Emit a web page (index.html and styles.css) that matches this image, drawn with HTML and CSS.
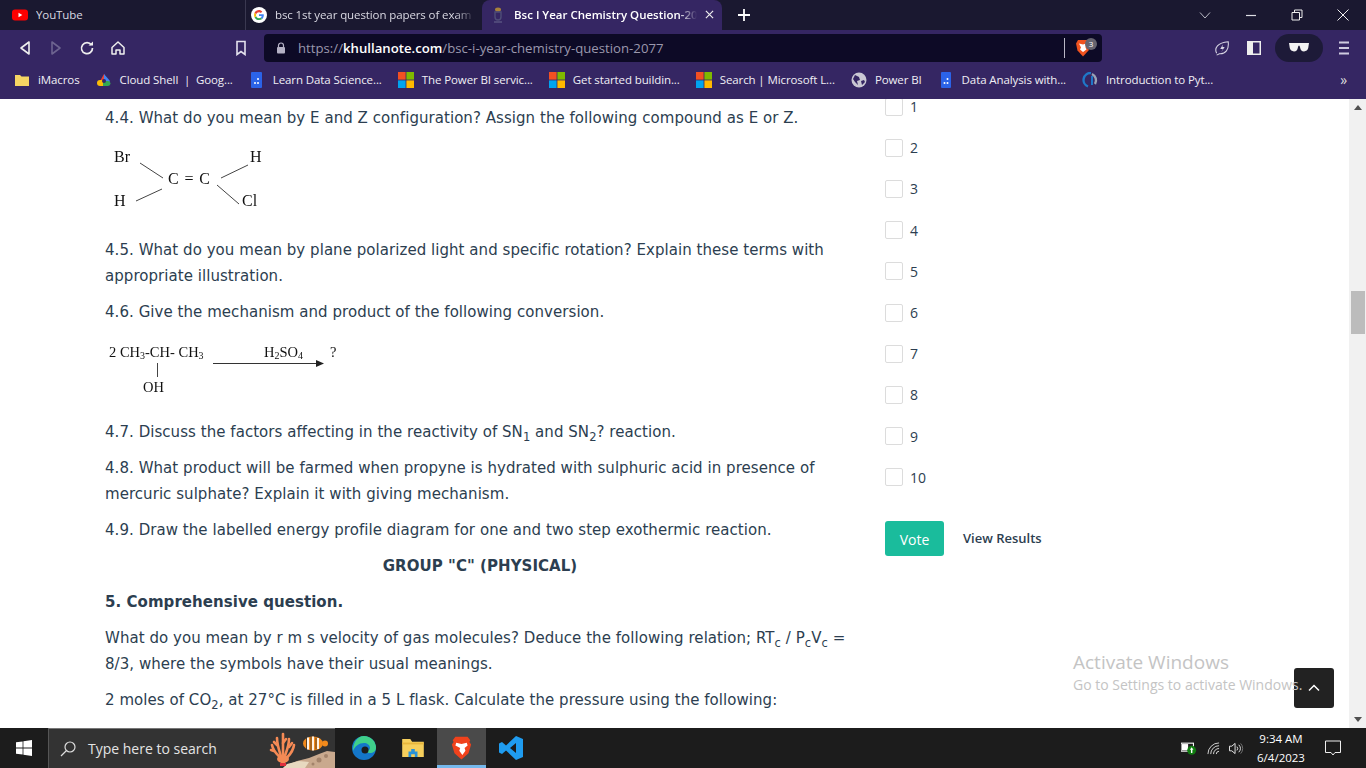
FILE: index.html
```html
<!DOCTYPE html>
<html lang="en">
<head>
<meta charset="utf-8">
<title>Bsc I Year Chemistry Question-2077</title>
<link rel="stylesheet" href="styles.css">
</head>
<body>
<div class="screen">
  <header class="tabstrip">
    <div class="tab tab-yt">
      <svg class="ic16" viewBox="0 0 16 16"><rect x="0" y="2.500" width="16" height="11" rx="3" fill="#f00"/><path d="M6.500 5.800v4.400L10.300 8z" fill="#fff"/></svg>
      <span class="tab-title">YouTube</span>
    </div>
    <div class="tab tab-g">
      <svg class="ic16" viewBox="0 0 16 16"><circle cx="8" cy="8" r="8" fill="#fff"/><path d="M12.800 8.200c0-.4 0-.7-.1-1H8v1.900h2.700c-.1.700-.5 1.200-1 1.600l1.600 1.200c.9-.9 1.500-2.200 1.500-3.700z" fill="#4285f4"/><path d="M8 13c1.300 0 2.400-.4 3.300-1.100l-1.600-1.200c-.4.300-1 .5-1.700.5-1.300 0-2.400-.9-2.800-2L3.600 10.400C4.400 12 6.100 13 8 13z" fill="#34a853"/><path d="M5.200 9.200c-.2-.7-.2-1.400 0-2L3.600 5.600c-.7 1.400-.7 3.400 0 4.800z" fill="#fbbc05"/><path d="M8 5.200c.7 0 1.400.3 1.900.7l1.400-1.400C10.400 3.600 9.300 3 8 3 6.100 3 4.400 4 3.600 5.600l1.600 1.600c.4-1.200 1.500-2 2.800-2z" fill="#ea4335"/></svg>
      <span class="tab-title tab-fade">bsc 1st year question papers of exam 2</span>
    </div>
    <div class="tab tab-active">
      <svg class="ic16" viewBox="0 0 16 16"><ellipse cx="8" cy="2.500" rx="3" ry="2" fill="#a8823c"/><path d="M5 5h6v5c0 2-1 3-3 3s-3-1-3-3z" fill="none" stroke="#4f4e78" stroke-width="1.400"/><path d="M4 15h8" stroke="#6a6890"/></svg>
      <span class="tab-title tab-strong tab-fade">Bsc I Year Chemistry Question-2077</span>
      <svg class="ic10" viewBox="0 0 10 10"><path d="M1 1l8 8M9 1l-8 8" stroke="#eee" stroke-width="1.300"/></svg>
    </div>
    <svg class="newtab" viewBox="0 0 12 12"><path d="M6 0v12M0 6h12" stroke="#fff" stroke-width="1.800"/></svg>
    <div class="winctl">
      <svg viewBox="0 0 12 12" class="ctl"><path d="M1 3.500l5 5.500 5-5.500" fill="none" stroke="#b9b9c4"/></svg>
      <svg viewBox="0 0 12 12" class="ctl"><path d="M1 6.500h10" stroke="#dedee4" stroke-width="1.200"/></svg>
      <svg viewBox="0 0 12 12" class="ctl"><path d="M1 3.500h7.500V11H1zM3.500 3.500V1H11v7.500H8.500" fill="none" stroke="#eee"/></svg>
      <svg viewBox="0 0 12 12" class="ctl"><path d="M.5.500l11 11M11.500.500l-11 11" stroke="#eee"/></svg>
    </div>
  </header>

  <div class="toolbar">
    <nav class="navbtns">
      <svg class="nav-i" viewBox="0 0 14 16"><path d="M11 2v12L3 8z" fill="none" stroke="#eee" stroke-width="1.600" stroke-linejoin="round"/></svg>
      <svg class="nav-i" viewBox="0 0 14 16"><path d="M3 2v12l8-6z" fill="none" stroke="#6d6490" stroke-width="1.600" stroke-linejoin="round"/></svg>
      <svg class="nav-i" viewBox="0 0 16 16"><path d="M12.500 5A5.500 5.500 0 1 0 13.500 8" fill="none" stroke="#eee" stroke-width="1.700"/><path d="M9.500 5.500h4.500V1.500z" fill="#eee"/></svg>
      <svg class="nav-i" viewBox="0 0 16 16"><path d="M8 2L2 7.500V14h4v-4h4v4h4V7.500z" fill="none" stroke="#eee" stroke-width="1.500" stroke-linejoin="round"/></svg>
    </nav>
    <svg class="bookmark-i" viewBox="0 0 12 16"><path d="M2 1.500h8v13L6 11.500l-4 3z" fill="none" stroke="#e4e2ee" stroke-width="1.600"/></svg>
    <div class="urlbar">
      <svg class="lock" viewBox="0 0 10 12"><path d="M2.500 5V3.500a2.500 2.500 0 0 1 5 0V5" fill="none" stroke="#b5b2c6" stroke-width="1.200"/><rect x="1" y="5" width="8" height="6.500" rx="1" fill="#b5b2c6"/></svg>
      <span class="url"><span class="url-dim">https://</span><span class="url-host">khullanote.com</span><span class="url-dim">/bsc-i-year-chemistry-question-2077</span></span>
      <span class="url-div"></span>
      <span class="shield">
        <svg class="shield-i" viewBox="0 0 16 18"><path d="M3 1h10l2 3.500-1.500 7L8 17.500 2.500 11.500 1 4.500z" fill="#f0521f"/><path d="M4 4.500l4 1 3-1-.5 4 1 2L8 13l-3-2.500 1-2z" fill="#fff"/></svg>
        <span class="badge">3</span>
      </span>
    </div>
    <div class="tool-right">
      <svg class="tr-leaf" viewBox="0 0 18 18"><path d="M3 15C0 9 4 3 16 2c1 9-3 14-10 13.500L3 17" fill="none" stroke="#d8d6e4" stroke-width="1.200"/><path d="M10 5L7 10h3l-2 4 4-6H9.500z" fill="#d8d6e4"/></svg>
      <svg class="tr-panel" viewBox="0 0 14 14"><rect x=".750" y=".750" width="12.500" height="12.500" fill="none" stroke="#eee" stroke-width="1.500"/><rect x="1" y="1" width="5" height="12" fill="#eee"/></svg>
      <span class="pill"><svg class="glasses" viewBox="0 0 18 8"><path d="M0 0h18l-.7 4.500Q16.500 7.500 13.500 7.500T10 4L9.500 2.500h-1L8 4Q7.500 7.500 4.500 7.500T.7 4.500z" fill="#f2f2f2"/></svg></span>
      <svg class="tr-menu" viewBox="0 0 12 14"><path d="M1 1.500h10M1 7h10M1 12.500h10" stroke="#cfcbe0" stroke-width="1.800"/></svg>
    </div>
  </div>

  <div class="bookmarks">
    <a class="bm"><svg class="ic16" viewBox="0 0 16 16"><path d="M1 3h5l1.500 1.500H15V14H1z" fill="#f5d563"/></svg><span>iMacros</span></a>
    <a class="bm"><svg class="ic16" viewBox="0 0 16 16"><path d="M3 11L8 2l3 5-4 4z" fill="#ea4335"/><path d="M8 2l6 7-3 4-3-3z" fill="#4285f4"/><path d="M1 11a3 3 0 0 1 3-3h3v6H4a3 3 0 0 1-3-3z" fill="#fbbc05"/><path d="M7 9h5a2.500 2.500 0 0 1 0 5H7z" fill="#34a853"/><circle cx="8" cy="9" r="2" fill="#352663"/></svg><span>Cloud Shell&nbsp; | &nbsp;Goog...</span></a>
    <a class="bm"><svg class="ic16" viewBox="0 0 16 16"><rect x="2" y="0" width="11" height="16" rx="1" fill="#2b63e8"/><circle cx="9" cy="7" r="1" fill="#fff"/><circle cx="9" cy="11" r="1" fill="#fff"/><circle cx="6" cy="11" r="1" fill="#fff"/></svg><span>Learn Data Science...</span></a>
    <a class="bm"><svg class="ic16" viewBox="0 0 16 16"><rect width="7.600" height="7.600" fill="#f25022"/><rect x="8.400" width="7.600" height="7.600" fill="#7fba00"/><rect y="8.400" width="7.600" height="7.600" fill="#00a4ef"/><rect x="8.400" y="8.400" width="7.600" height="7.600" fill="#ffb900"/></svg><span>The Power BI servic...</span></a>
    <a class="bm"><svg class="ic16" viewBox="0 0 16 16"><rect width="7.600" height="7.600" fill="#f25022"/><rect x="8.400" width="7.600" height="7.600" fill="#7fba00"/><rect y="8.400" width="7.600" height="7.600" fill="#00a4ef"/><rect x="8.400" y="8.400" width="7.600" height="7.600" fill="#ffb900"/></svg><span>Get started buildin...</span></a>
    <a class="bm"><svg class="ic16" viewBox="0 0 16 16"><rect width="7.600" height="7.600" fill="#f25022"/><rect x="8.400" width="7.600" height="7.600" fill="#7fba00"/><rect y="8.400" width="7.600" height="7.600" fill="#00a4ef"/><rect x="8.400" y="8.400" width="7.600" height="7.600" fill="#ffb900"/></svg><span>Search | Microsoft L...</span></a>
    <a class="bm"><svg class="ic16" viewBox="0 0 16 16"><circle cx="8" cy="8" r="7.500" fill="#c9c7d3"/><path d="M4 3l4 2 1 3-3 1 1 4-3-3-2-3zM10 9l3-1 1 2-3 3z" fill="#352663"/></svg><span>Power BI</span></a>
    <a class="bm"><svg class="ic16" viewBox="0 0 16 16"><rect x="3" y="0" width="10" height="16" rx="1" fill="#2b63e8"/><circle cx="9.500" cy="7" r="1" fill="#fff"/><circle cx="9.500" cy="11" r="1" fill="#fff"/><circle cx="6.500" cy="11" r="1" fill="#fff"/></svg><span>Data Analysis with...</span></a>
    <a class="bm"><svg class="ic16" viewBox="0 0 16 16"><path d="M9 1a7 7 0 0 0-3 13.500" fill="none" stroke="#1f78c8" stroke-width="2.400"/><path d="M10 2a7 7 0 0 1 3 10" fill="none" stroke="#9aa3b5" stroke-width="2.400"/><path d="M10 4v9" stroke="#1f78c8" stroke-width="2"/></svg><span>Introduction to Pyt...</span></a>
    <span class="bm-more">»</span>
  </div>

  <div class="viewport">
    <div class="page">
      <main class="article">
        <p>4.4. What do you mean by E and Z configuration? Assign the following compound as E or Z.</p>
        <figure class="fig fig-ez">
          <svg class="chem" width="170" height="80" viewBox="0 0 170 80">
            <text x="14" y="26">Br</text><text x="150" y="26">H</text>
            <text class="cc" x="68" y="48">C = C</text>
            <text x="14" y="70">H</text><text x="142" y="70">Cl</text>
            <path d="M40 27l23 15M36 65l26-12M121 42l27-13M117 49l22 19" stroke="#444" fill="none"/>
          </svg>
        </figure>
        <p>4.5. What do you mean by plane polarized light and specific rotation? Explain these terms with appropriate illustration.</p>
        <p>4.6. Give the mechanism and product of the following conversion.</p>
        <figure class="fig fig-rx">
          <svg class="chem chem-rx" width="240" height="65" viewBox="0 0 240 65">
            <text x="9" y="21">2 CH<tspan class="s" dy="2">3</tspan><tspan dy="-2">-CH- CH</tspan><tspan class="s" dy="2">3</tspan></text>
            <text x="164" y="21">H<tspan class="s" dy="2">2</tspan><tspan dy="-2">SO</tspan><tspan class="s" dy="2">4</tspan></text>
            <text x="230" y="21">?</text>
            <text x="43" y="56">OH</text>
            <path d="M57.500 27v14" stroke="#444" fill="none"/>
            <path d="M113 27.500h104" stroke="#333" fill="none"/>
            <path d="M216 24l8 3.500-8 3.500z" fill="#222"/>
          </svg>
        </figure>
        <p>4.7. Discuss the factors affecting in the reactivity of SN<sub>1</sub> and SN<sub>2</sub>? reaction.</p>
        <p>4.8. What product will be farmed when propyne is hydrated with sulphuric acid in presence of mercuric sulphate? Explain it with giving mechanism.</p>
        <p>4.9. Draw the labelled energy profile diagram for one and two step exothermic reaction.</p>
        <p class="center"><strong>GROUP "C" (PHYSICAL)</strong></p>
        <p><strong>5. Comprehensive question.</strong></p>
        <p>What do you mean by r m s velocity of gas molecules? Deduce the following relation; RT<sub>c</sub> / P<sub>c</sub>V<sub>c</sub> = 8/3, where the symbols have their usual meanings.</p>
        <p>2 moles of CO<sub>2</sub>, at 27°C is filled in a 5 L flask. Calculate the pressure using the following:</p>
      </main>
      <aside class="poll">
        <ul class="options">
          <li><span class="box"></span>1</li>
          <li><span class="box"></span>2</li>
          <li><span class="box"></span>3</li>
          <li><span class="box"></span>4</li>
          <li><span class="box"></span>5</li>
          <li><span class="box"></span>6</li>
          <li><span class="box"></span>7</li>
          <li><span class="box"></span>8</li>
          <li><span class="box"></span>9</li>
          <li><span class="box"></span>10</li>
        </ul>
        <div class="poll-actions">
          <button class="vote" type="button">Vote</button>
          <a class="results">View Results</a>
        </div>
      </aside>
    </div>
    <div class="scrollbar">
      <span class="arrow-up"></span>
      <span class="thumb"></span>
      <span class="arrow-down"></span>
    </div>
    <button class="totop" type="button"><svg viewBox="0 0 12 8" class="totop-i"><path d="M1 6.500l5-5 5 5" fill="none" stroke="#fff" stroke-width="1.500"/></svg></button>
    <div class="watermark">
      <div class="wm-1">Activate Windows</div>
      <div class="wm-2">Go to Settings to activate Windows.</div>
    </div>
  </div>

  <footer class="taskbar">
    <svg class="start" viewBox="0 0 16 16"><path d="M0 2.300l6.600-.9v6.200H0zM7.400 1.300L16 0v7.600H7.400zM0 8.400h6.600v6.200L0 13.700zM7.400 8.400H16V16l-8.600-1.300z" fill="#fff"/></svg>
    <div class="search">
      <svg class="search-i" viewBox="0 0 16 16"><circle cx="10" cy="6" r="5" fill="none" stroke="#ddd" stroke-width="1.200"/><path d="M6.500 9.500L1 15" stroke="#ddd" stroke-width="1.300"/></svg>
      <span class="search-text">Type here to search</span>
      <svg class="search-art" viewBox="0 0 66 39">
        <path d="M66 39V23l-8-1-8 3-10 4-12 3-10 4-4 3z" fill="#c9a98e"/>
        <path d="M18 35l12-3 10 1-4 6H14z" fill="#e8d9c0"/>
        <circle cx="50" cy="31" r="2.500" fill="#a3836b"/><circle cx="57" cy="27" r="2" fill="#a3836b"/><circle cx="44" cy="35" r="1.500" fill="#a3836b"/>
        <g fill="none" stroke="#f58a55" stroke-width="2.600" stroke-linecap="round">
          <path d="M14 34C13 27 5 26 3 16"/><path d="M14 34C12 26 8 18 8 9"/><path d="M14 34V5"/><path d="M14 34c1-8 6-14 6-24"/><path d="M14 34c3-6 10-9 11-18"/>
          <path d="M8 16l-3-3M14 14l3-4M20 18l3-4M5 22l-3-1"/>
        </g>
        <ellipse cx="14" cy="30" rx="6" ry="4" fill="#f58a55"/>
        <rect x="11" y="34" width="6" height="3" fill="#e02f3d"/>
        <ellipse cx="44" cy="14.500" rx="10" ry="7" fill="#f28a1c"/>
        <path d="M39 8.500v12M44 7.500v14M49 9v11" stroke="#fff" stroke-width="1.800"/>
        <path d="M37.500 9v11M42 8v13M47 8.500v12" stroke="#222" stroke-width=".7"/>
        <circle cx="56" cy="14.500" r="3" fill="#f28a1c"/>
      </svg>
    </div>
    <div class="pins">
      <span class="pin"><svg class="pin-i" viewBox="0 0 24 24"><circle cx="12" cy="12" r="12" fill="#1476c9"/><path d="M12 0a12 12 0 0 1 12 12c0 3-3 5-6 5-2 0-4-1-4-2 2 0 4-1 4-3 0-3-3-5-6-5-5 0-9 3-11 8C1 7 5 0 12 0z" fill="#3fd08a"/><circle cx="13" cy="14" r="3.500" fill="#1c1c1c"/></svg></span>
      <span class="pin"><svg class="pin-folder" viewBox="0 0 24 20"><path d="M0 0h9l2 3h13v17H0z" fill="#f6cf5c"/><path d="M0 4h24v2H0z" fill="#e7b53c"/><path d="M7 20v-6h3V11h4v3h3v6h-3v-3h-4v3z" fill="#2a93d8"/></svg></span>
      <span class="pin pin-on"><svg class="pin-brave" viewBox="0 0 24 26"><path d="M5 0h14l3 4-1 2 2 3-3 10-8 7-8-7-3-10 2-3-1-2z" fill="#f0421c"/><path d="M6 7l6 1.500L18 7l1 3-3.500 3 1 3-3.500 5-3.500-5 1-3L5 10z" fill="#fff"/></svg></span>
      <span class="pin"><svg class="pin-i" viewBox="0 0 24 24"><path d="M17 0l7 3v18l-7 3L7 14.500 3 18l-3-1.500V7.500L3 6l4 3.500zM17 7l-6 5 6 5z" fill="#1f9cf0"/></svg></span>
    </div>
    <div class="tray">
      <svg class="tray-bat" viewBox="0 0 18 14"><rect x="0" y="1" width="14" height="9" fill="none" stroke="#fff" stroke-width="1.200"/><rect x="1" y="2" width="7" height="7" fill="#fff"/><circle cx="12" cy="9" r="5" fill="#107c10"/><path d="M12 5.500l2 3h-4zM11.200 8h1.600v4h-1.600z" fill="#fff"/></svg>
      <svg class="tray-wifi" viewBox="0 0 14 14"><path d="M1 13A12 12 0 0 1 13 1M4 13a9 9 0 0 1 9-9M7 13a6 6 0 0 1 6-6M10 13a3 3 0 0 1 3-3" fill="none" stroke="#ddd"/></svg>
      <svg class="tray-vol" viewBox="0 0 16 14"><path d="M1 4.500h2.500L7 1.500v11l-3.500-3H1z" fill="none" stroke="#eee"/><path d="M9 5a3 3 0 0 1 0 4M11 3a6 6 0 0 1 0 8" fill="none" stroke="#eee"/><path d="M13 1.500a8 8 0 0 1 0 11" fill="none" stroke="#777"/></svg>
      <div class="clock"><div>9:34 AM</div><div>6/4/2023</div></div>
      <svg class="notif" viewBox="0 0 16 16"><path d="M.5 1h15v11.500H10L8 15l-2-2.500H.5z" fill="none" stroke="#eee"/></svg>
    </div>
  </footer>
</div>
</body>
</html>
```

FILE: styles.css
```css
* { box-sizing: border-box; }
html, body { margin: 0; padding: 0; height: 100%; overflow: hidden; background: #fff; }
.screen { width: 1366px; height: 768px; display: flex; flex-direction: column; font-family: "Open Sans", "Noto Sans", sans-serif; }
svg { display: block; flex: none; }
.ic16 { width: 16px; height: 16px; }
.ic10 { width: 9px; height: 9px; margin-left: auto; }

.tabstrip { height: 30px; flex: none; background: #1a1830; display: flex; align-items: center; color: #d9d8e2; font-size: 11.500px; letter-spacing: -.1px; }
.tab { height: 30px; display: flex; align-items: center; gap: 8px; padding-bottom: 1px; }
.tab-yt { width: 245px; padding-left: 12px; }
.tab-g { width: 237px; padding-left: 5px; border-left: 1px solid #3a3850; }
.tab-active { width: 240px; padding: 0 8px 1px 8px; background: #352663; border-radius: 8px 8px 0 0; color: #fff; }
.tab-title { white-space: nowrap; overflow: hidden; }
.tab-fade { -webkit-mask-image: linear-gradient(to right, #000 90%, transparent); mask-image: linear-gradient(to right, #000 90%, transparent); }
.tab-g .tab-title { width: 200px; }
.tab-active .tab-title { width: 190px; }
.tab-strong { font-weight: 600; letter-spacing: 0; }
.newtab { width: 12px; height: 12px; margin-left: 16px; }
.winctl { margin-left: auto; display: flex; align-items: center; gap: 34px; padding-right: 17px; }
.ctl { width: 12px; height: 12px; }

.toolbar { height: 35px; flex: none; background: #352663; display: flex; align-items: center; }
.navbtns { display: flex; align-items: center; width: 235px; padding-left: 17px; gap: 15px; }
.nav-i { width: 16px; height: 16px; }
.bookmark-i { width: 12px; height: 16px; }
.urlbar { width: 838px; height: 28px; margin-left: 17px; background: #0d0a26; border-radius: 4px; display: flex; align-items: center; padding-left: 12px; }
.lock { width: 10px; height: 12px; }
.url { margin-left: 12px; font-size: 13.200px; white-space: nowrap; }
.url-dim { color: #9b98ad; }
.url-host { color: #fff; font-weight: 600; }
.url-div { width: 1px; height: 20px; background: #b9b7c6; margin-left: auto; }
.shield { position: relative; width: 27px; height: 20px; margin-left: 10px; }
.shield-i { width: 16px; height: 18px; position: absolute; left: 0; top: 1px; }
.badge { position: absolute; left: 10px; top: 0; width: 12px; height: 12px; border-radius: 50%; background: #66646f; color: #fff; font-size: 8px; line-height: 12px; text-align: center; }
.tool-right { display: flex; align-items: center; flex: 1; padding-left: 112px; }
.tr-leaf { width: 16px; height: 16px; }
.tr-panel { width: 14px; height: 14px; margin-left: 17px; }
.pill { width: 48px; height: 28px; border-radius: 14px; background: #1d1a38; display: flex; align-items: center; justify-content: center; margin-left: 14px; }
.glasses { width: 20px; height: 9px; }
.tr-menu { width: 12px; height: 14px; margin-left: 15px; }

.bookmarks { height: 34px; flex: none; background: #352663; display: flex; align-items: center; gap: 16px; padding: 0 0 5px 14px; color: #f0eff5; font-size: 11.500px; letter-spacing: -.1px; }
.bm { display: flex; align-items: center; gap: 8px; white-space: nowrap; }
.bm-more { margin-left: auto; margin-right: 19px; font-size: 14px; color: #ddd; }

.viewport { height: 629px; flex: none; display: flex; position: relative; background: #fff; overflow: hidden; }
.page { flex: 1; display: grid; grid-template-columns: 750px 1fr; column-gap: 30px; padding-left: 105px; align-items: start; }
.article { padding-top: 6px; color: #2c3e50; font-family: "DejaVu Sans", Verdana, sans-serif; font-size: 15px; line-height: 26px; letter-spacing: .05px; }
.article p { margin: 0 0 10px; }
.article sub { font-size: 11.500px; line-height: 0; }
.center { text-align: center; }
.fig { margin: 0; }
.fig-ez { height: 101px; }
.fig-ez .chem { margin: -5px 0 0 -5px; }
.fig-rx { height: 84px; padding-top: 1px; }
.fig-rx .chem { margin-left: -5px; }
.chem { filter: blur(.3px); }
.chem text { font-family: "Liberation Serif", serif; font-size: 16px; fill: #111; letter-spacing: 0; }
.chem .cc { letter-spacing: .9px; }
.chem-rx text { font-size: 14.500px; }
.chem .s { font-size: 10px; }

.poll { color: #2c3e50; font-size: 14px; }
.options { list-style: none; margin: -13px 0 0; padding: 0; }
.options li { height: 41.200px; display: flex; align-items: center; gap: 7px; }
.box { width: 18px; height: 18px; border: 1px solid #dcdcdc; border-radius: 2px; background: #fff; }
.poll-actions { display: flex; align-items: center; gap: 19px; margin-top: 23px; }
.vote { width: 59px; height: 35px; background: #1abc9c; border: 0; border-radius: 3px; color: #fff; font: 14px "Open Sans", sans-serif; padding: 2px 0 0; }
.results { font-size: 13px; font-weight: 600; color: #2c3e50; margin-top: -1px; }

.scrollbar { width: 17px; flex: none; background: #f1f1f1; display: flex; flex-direction: column; align-items: center; }
.arrow-up { margin-top: 6px; border: 4px solid transparent; border-top: 0; border-bottom: 5px solid #505050; }
.thumb { width: 14px; height: 43px; background: #bcbcbc; margin-top: 181px; }
.arrow-down { margin-top: auto; margin-bottom: 6px; border: 4px solid transparent; border-bottom: 0; border-top: 5px solid #505050; }

.watermark { position: absolute; left: 1073px; top: 550px; color: #c4c4c4; white-space: nowrap; }
.wm-1 { font-size: 19px; line-height: 26px; }
.wm-2 { font-size: 14px; line-height: 20px; }
.totop { position: absolute; left: 1294px; top: 569px; width: 40px; height: 40px; background: #222; border: 0; border-radius: 3px; display: flex; align-items: center; justify-content: center; padding: 0; }
.totop-i { width: 12px; height: 8px; margin-top: -1px; }

.taskbar { height: 40px; flex: none; background: #1c1c1c; display: flex; align-items: stretch; }
.start { width: 16px; height: 16px; margin: 12px 0 0 16px; }
.search { width: 287px; margin-left: 16px; background: #333; border-top: 1px solid #777; border-left: 1px solid #555; display: flex; align-items: center; padding-left: 11px; }
.search-i { width: 16px; height: 16px; }
.search-text { color: #e4e4e4; font-size: 14px; margin-left: 12px; white-space: nowrap; }
.search-art { width: 66px; height: 39px; margin-left: auto; }
.pins { display: flex; margin-left: 4px; }
.pin { width: 49px; display: flex; align-items: center; justify-content: center; }
.pin-i { width: 24px; height: 24px; }
.pin-folder { width: 22px; height: 18px; }
.pin-brave { width: 21px; height: 24px; }
.pin-on { background: #4a4a4a; border-bottom: 3px solid #76b9ed; padding-top: 3px; }
.tray { margin-left: auto; display: flex; align-items: center; padding-right: 25px; color: #fff; }
.tray-bat { width: 16px; height: 13px; }
.tray-wifi { width: 13px; height: 13px; margin-left: 10px; }
.tray-vol { width: 16px; height: 13px; margin-left: 8px; }
.clock { width: 60px; text-align: center; font-size: 11.500px; line-height: 19px; margin-left: 7px; }
.notif { width: 16px; height: 16px; margin-left: 14px; }
```
